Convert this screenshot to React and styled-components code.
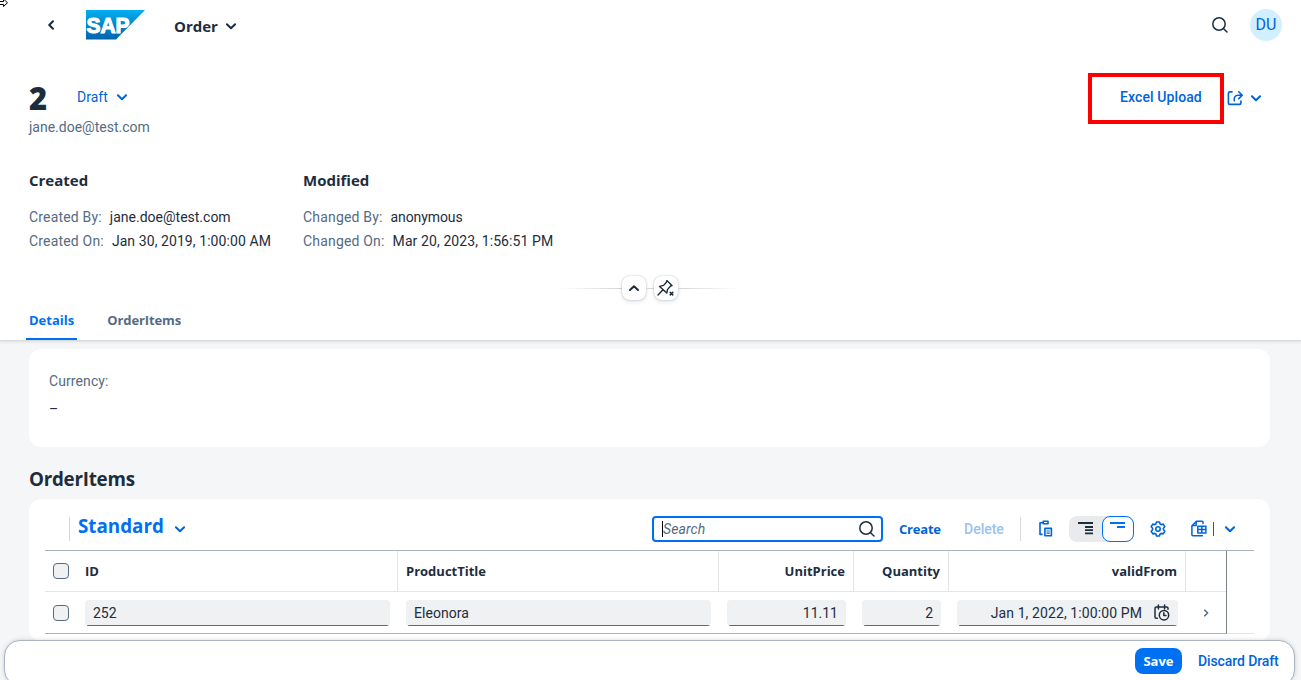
import React from "react";
import styled, { createGlobalStyle } from "styled-components";

const Global = createGlobalStyle`
  * { box-sizing: border-box; }
  html, body { margin: 0; padding: 0; }
  body { width: 1301px; height: 680px; overflow: hidden; background: #fff; }
`;
const Page = styled.div`
  position: relative; width: 1301px; height: 680px; overflow: hidden;
  display: flex; flex-direction: column; background: #f5f6f7;
  font-family: Roboto, "Noto Sans", sans-serif; font-size: 14px; line-height: 20px; color: #1d2d3e;
`;
const Text = styled.span`
  white-space: nowrap;
  font-size: ${(p) => p.$size || 14}px;
  font-weight: ${(p) => p.$weight || 400};
  color: ${(p) => p.$color || "#1d2d3e"};
  letter-spacing: ${(p) => p.$ls || 0}px;
  font-style: ${(p) => (p.$italic ? "italic" : "normal")};
`;
const Strong = styled(Text)`
  font-family: "Open Sans", sans-serif; font-weight: 700; font-size: ${(p) => p.$size || 13}px;
`;
const Svg = styled.svg`
  display: block; flex: none; fill: none; stroke: currentColor; stroke-linecap: round; stroke-linejoin: round;
  color: ${(p) => p.$color || "#1d2d3e"};
`;
const Cursor = styled(Svg)`position: absolute; left: 0; top: 0;`;

const Header = styled.header`
  flex: none; height: 341px; background: #fff; border-bottom: 1px solid #d9d9d9;
  box-shadow: 0 1px 3px rgba(34, 53, 72, 0.12); display: flex; flex-direction: column; position: relative;
`;
const ShellBar = styled.div`
  height: 51px; padding: 0 19px 1px 45px; display: flex; align-items: center;
`;
const Logo = styled.svg`display: block; margin: 0 29px 0 28px;`;
const ShellTitle = styled.div`display: flex; align-items: center; gap: 7px; padding-top: 1px;`;
const Spacer = styled.div`flex: 1;`;
const Avatar = styled.div`
  width: 32px; height: 32px; border-radius: 50%; background: #d1efff; margin-left: 22px;
  display: flex; align-items: center; justify-content: center;
`;
const TitleRow = styled.div`
  margin-top: 22px; height: 64px; padding: 0 39px 0 29px; display: flex; align-items: flex-start; justify-content: space-between;
`;
const TitleBlock = styled.div`display: flex; flex-direction: column;`;
const TitleLine = styled.div`height: 44px; padding-top: 4px; display: flex; align-items: center;`;
const ObjectTitle = styled.h1`
  margin: 0; width: 48px; padding-top: 1px; font: 900 31px/40px "Noto Sans", sans-serif; color: #1d2d3e;
`;
const Actions = styled.div`display: flex; align-items: center; height: 51px; padding-bottom: 2px;`;
const Highlight = styled.div`
  width: 136px; height: 51px; border: 4px solid #fe0000; padding: 0 0 3px 28px; margin: 2px 3px 0 0;
  display: flex; align-items: center;
`;
const Facets = styled.div`display: flex; margin-top: 33px; padding-left: 29px;`;
const Facet = styled.section`width: 274px; display: flex; flex-direction: column;`;
const FacetTitle = styled.div`height: 35px;`;
const Field = styled.div`height: 24px; line-height: 24px; display: flex; gap: 8px;`;
const EmptyValue = styled.div`padding-top: 8px; height: 28px;`;
const SnapBar = styled.div`
  margin-top: 23px; height: 24px; padding-left: 560px; display: flex; align-items: center;
`;
const Line = styled.div`
  height: 1px; width: ${(p) => p.$w}px;
  background: ${(p) => (p.$dir ? `linear-gradient(to ${p.$dir}, rgba(217,217,217,0), #d0d3d6)` : "#d9d9d9")};
`;
const SnapButton = styled.button`
  width: 24px; height: 24px; padding: 0; border: 0; border-radius: 8px; background: #fff;
  box-shadow: 0 0 2px rgba(34, 53, 72, 0.3), 0 2px 4px rgba(34, 53, 72, 0.12);
  display: flex; align-items: center; justify-content: center;
`;
const Tabs = styled.nav`height: 40px; padding-left: 26px; display: flex; gap: 27px;`;
const Tab = styled.div`
  height: 40px; padding: 10px 3px 0; line-height: 20px;
  border-bottom: 2px solid ${(p) => (p.$active ? "#0070f2" : "transparent")}; border-radius: 2px 2px 0 0;
`;

const Content = styled.main`flex: 1; padding: 8px 31px 0 29px; display: flex; flex-direction: column;`;
const Card = styled.section`
  flex: none; background: #fff; border-radius: 12px; height: ${(p) => p.$h}px; padding: ${(p) => p.$pad};
  display: flex; flex-direction: column;
`;
const SectionTitle = styled.h2`margin: 0; height: 52px; padding-top: 20px; line-height: 24px; font-size: 20px;`;
const Toolbar = styled.div`
  height: 52px; display: flex; align-items: center; padding: 8px 0 0; border-bottom: 1px solid #a8b2bd;
`;
const ToolItem = styled.div`height: 26px; display: flex; align-items: center; margin-left: ${(p) => p.$ml || 0}px; width: ${(p) => (p.$w ? p.$w + "px" : "auto")};`;
const VariantTitle = styled.div`height: 26px; width: 96px; margin-left: 8px; padding-bottom: 5px; display: flex; align-items: center;`;
const Divider = styled.div`width: 1px; height: ${(p) => p.$h || 24}px; background: ${(p) => p.$color || "#d9d9d9"}; margin-left: ${(p) => p.$ml || 0}px;`;
const SearchField = styled.div`
  width: 231px; height: 26px; border: 2px solid #0070f2; border-radius: 4px; background: #fff;
  display: flex; align-items: center; justify-content: space-between; padding: 0 6px 0 8px;
`;
const Caret = styled.div`width: 1px; height: 16px; background: #000;`;
const Inline = styled.div`display: flex; align-items: center;`;
const Segmented = styled.div`
  width: 65px; height: 26px; border-radius: 8px; background: #e8eaec; display: flex; margin-left: 16px;
`;
const Segment = styled.div`
  width: ${(p) => (p.$on ? 32 : 33)}px; height: 26px; border-radius: 8px; display: flex; align-items: center; justify-content: center; padding-bottom: 2px;
  border: 1px solid ${(p) => (p.$on ? "#0070f2" : "transparent")}; background: ${(p) => (p.$on ? "#fff" : "transparent")};
`;
const Table = styled.div`
  width: 1182px; border-right: 1px solid #7b8288; border-bottom: 1px solid #a8b2bd;
`;
const TableWrap = styled.div`display: flex; align-items: stretch; height: 83px;`;
const TableRest = styled.div`flex: 1; border-bottom: 1px solid #e5e5e5;`;
const Row = styled.div`
  display: grid; grid-template-columns: 32px 321px 321px 135px 95px 237px 40px; height: 41px;
  border-bottom: ${(p) => (p.$head ? "1px solid #e5e5e5" : "0")};
`;
const Cell = styled.div`
  display: flex; align-items: center; padding: 0 ${(p) => (p.$line ? 8 : 7)}px 0 8px;
  justify-content: ${(p) => (p.$end ? "flex-end" : "flex-start")};
  border-right: 1px solid ${(p) => (p.$line ? "#e5e5e5" : "transparent")};
`;
const NavCell = styled.div`display: flex; align-items: center; padding-left: 14px;`;
const Check = styled.div`width: 16px; height: 16px; flex: none; border: 1px solid #556b82; border-radius: 4px; background: #eff1f2;`;
const Input = styled.div`
  flex: 1; height: 26px; border-radius: 4px; background: linear-gradient(#556b82, #556b82) center bottom / calc(100% - 3px) 1px no-repeat #eff1f2;
  display: flex; align-items: center; padding: 0 8px; justify-content: ${(p) => (p.$end ? "flex-end" : "flex-start")}; gap: 12px;
`;
const Footer = styled.footer`
  position: absolute; left: 4px; top: 640px; width: 1291px; height: 46px; border: 1px solid #a8b4c0; border-radius: 16px;
  background: #fff; box-shadow: 0 0 4px rgba(34, 53, 72, 0.2); display: flex; justify-content: flex-end; padding: 7px 0 0 0;
`;
const SaveButton = styled.button`
  width: 47px; height: 26px; border: 0; border-radius: 8px; background: #0070f2; padding: 0; font-family: inherit;
  display: flex; align-items: center; justify-content: center;
`;

const BLUE = "#0064d9";
const GREY = "#556b82";

const Chevron = ({ dir = "down", color, size = 12, w = 2 }) => {
  const d = { down: "M1.9 4.2 L6 8.2 L10.1 4.2", up: "M2 8 L6 4.2 L10 8", left: "M8 2.2 L4.2 6 L8 9.8", right: "M4.8 3.2 L7.6 6 L4.8 8.8" }[dir];
  return <Svg width={size} height={size} viewBox="0 0 12 12" strokeWidth={w} $color={color}><path d={d} /></Svg>;
};
const SearchIcon = () => (
  <Svg width="16" height="16" viewBox="0 0 16 16" strokeWidth="1.5"><circle cx="7" cy="7" r="6.2" /><path d="M11.6 11.7 L15 15" /></Svg>
);
const ShareIcon = () => (
  <Svg width="16" height="16" viewBox="0 0 16 16" strokeWidth="1.6" $color={BLUE}>
    <path d="M5 1.9 H2.9 Q1.4 1.9 1.4 3.4 V12.9 Q1.4 14.4 2.9 14.4 H11.9 Q13.9 14.4 13.9 12.9 V11" />
    <path d="M7.3 10.8 Q6.7 5.2 11 5.2 H14.8 M11.8 1.8 L15.2 5.2 L11.8 8.6" />
  </Svg>
);
const PinIcon = () => (
  <Svg width="18" height="18" viewBox="0 0 18 18" strokeWidth="1.4">
    <path d="M9.8 1.6 L15 6.6 L13.6 7 L10.6 10.4 L9.8 14 L2.6 7.4 L6.6 6.4 L9.4 3.2 Z M6 10.8 L1 15.9" />
    <path d="M13.2 13.4 L15.8 15.8 M15.8 13.4 L13.2 15.8" strokeWidth="1.6" />
  </Svg>
);
const PasteIcon = () => (
  <Svg width="14" height="17" viewBox="0 0 14 17" strokeWidth="1.6" $color={BLUE}>
    <path d="M3.4 2.8 H1 V14.4 H3 M4.2 1.2 H9 V3.8 H4.2 Z" />
    <path d="M5.9 8.4 H12.4 V15.8 H5.9 Z" /><path d="M7.9 11 H10.4 M7.9 13.2 H10.4" strokeWidth="1.2" />
  </Svg>
);
const GearIcon = () => (
  <Svg width="16" height="16" viewBox="0 0 16 16" strokeWidth="1.6" $color={BLUE}>
    <path d="M6.5 1 H9.5 L10.1 3 L11.2 3.6 L13.2 3.1 L14.8 5.7 L13.4 7.3 V8.7 L14.8 10.3 L13.2 12.9 L11.2 12.4 L10.1 13 L9.5 15 H6.5 L5.9 13 L4.8 12.4 L2.8 12.9 L1.2 10.3 L2.6 8.7 V7.3 L1.2 5.7 L2.8 3.1 L4.8 3.6 L5.9 3 Z" />
    <circle cx="8" cy="8" r="2.2" />
  </Svg>
);
const ExcelIcon = () => (
  <Svg width="16" height="17" viewBox="0 0 16 17" strokeWidth="1.5" $color={BLUE}>
    <path d="M12 3.4 V2.2 Q12 1.2 11 1.2 H5.4 L.9 5.8 V14.8 Q.9 15.8 1.9 15.8 H11.4 M5.2 1.6 V5.6 H1.4" />
    <path d="M6.8 6.3 H14.9 V13 H6.8 Z M10.8 6.3 V13 M6.8 9.6 H14.9" />
  </Svg>
);
const CalendarIcon = () => (
  <Svg width="16" height="17" viewBox="0 0 16 17" strokeWidth="1.5">
    <path d="M3.3 14.3 H2.4 Q1 14.3 1 12.9 V4.3 Q1 2.9 2.4 2.9 H12.6 Q14 2.9 14 4.3 V5.2 M4.4 1 V5 M10.6 1 V5" />
    <circle cx="10" cy="11.2" r="4.7" /><path d="M9.8 8.8 V11.4 H12" />
  </Svg>
);

const FieldPair = ({ label, value, vls }) => (
  <Field><Text $color={GREY} $ls={0.18}>{label}</Text><Text $ls={vls}>{value}</Text></Field>
);

export default function App() {
  return (
    <Page>
      <Global />
      <Header>
        <ShellBar>
          <Chevron dir="left" />
          <Logo width="60" height="30" viewBox="0 0 60 30">
            <defs><linearGradient id="sap" x1="0" y1="0" x2="0" y2="1"><stop offset="0" stopColor="#00aeef" /><stop offset="1" stopColor="#0062ac" /></linearGradient></defs>
            <path d="M1 0 H60 L31 29.5 H1 Z" fill="url(#sap)" />
            <text x="1.5" y="22.8" textLength="43" lengthAdjust="spacingAndGlyphs" fontFamily="Liberation Sans, sans-serif" fontWeight="700" fontSize="22.5" fill="#fff" stroke="#fff" strokeWidth="1.2">SAP</text>
          </Logo>
          <ShellTitle><Strong $size={15}>Order</Strong><Chevron /></ShellTitle>
          <Spacer />
          <SearchIcon />
          <Avatar><Text $size={16} $color={BLUE}>DU</Text></Avatar>
        </ShellBar>
        <TitleRow>
          <TitleBlock>
            <TitleLine>
              <ObjectTitle>2</ObjectTitle>
              <Text $color={BLUE}>Draft</Text>
              <ToolItem $ml={8}><Chevron color={BLUE} /></ToolItem>
            </TitleLine>
            <Text $color={GREY}>jane.doe@test.com</Text>
          </TitleBlock>
          <Actions>
            <Highlight><Text $color={BLUE} $weight={500} $ls={0.1}>Excel Upload</Text></Highlight>
            <ShareIcon />
            <ToolItem $ml={7}><Chevron color={BLUE} /></ToolItem>
          </Actions>
        </TitleRow>
        <Facets>
          <Facet>
            <FacetTitle><Strong $size={15}>Created</Strong></FacetTitle>
            <FieldPair label="Created By:" value="jane.doe@test.com" />
            <FieldPair label="Created On:" value="Jan 30, 2019, 1:00:00 AM" vls={0.08} />
          </Facet>
          <Facet>
            <FacetTitle><Strong $size={15}>Modified</Strong></FacetTitle>
            <FieldPair label="Changed By:" value="anonymous" vls={-0.1} />
            <FieldPair label="Changed On:" value="Mar 20, 2023, 1:56:51 PM" vls={0.1} />
          </Facet>
        </Facets>
        <SnapBar>
          <Line $w={62} $dir="right" /><SnapButton><Chevron dir="up" /></SnapButton>
          <Line $w={8} /><SnapButton><PinIcon /></SnapButton><Line $w={60} $dir="left" />
        </SnapBar>
        <Tabs>
          <Tab $active><Strong $color="#0070f2">Details</Strong></Tab>
          <Tab><Strong $color={GREY} $ls={-0.1}>OrderItems</Strong></Tab>
        </Tabs>
      </Header>
      <Content>
        <Card $h={98} $pad="22px 20px 0">
          <Text $color={GREY} $ls={0.1}>Currency:</Text>
          <EmptyValue><Text>–</Text></EmptyValue>
        </Card>
        <SectionTitle><Strong $size={18.8} $ls={-0.25}>OrderItems</Strong></SectionTitle>
        <Card $h={142} $pad="0 16px">
          <Toolbar>
            <Divider $ml={24} />
            <VariantTitle><Strong $size={18.8} $color="#0070f2">Standard</Strong></VariantTitle>
            <Chevron color={BLUE} />
            <Spacer />
            <SearchField>
              <Inline><Caret /><Text $italic $color={GREY} $ls={0.1}>Search</Text></Inline>
              <SearchIcon />
            </SearchField>
            <ToolItem $ml={16} $w={65}><Strong $color={BLUE} $ls={-0.2}>Create</Strong></ToolItem>
            <ToolItem $w={56}><Text $weight={500} $color="#99c1f0">Delete</Text></ToolItem>
            <Divider />
            <ToolItem $ml={18}><PasteIcon /></ToolItem>
            <Segmented>
              <Segment>
                <Svg width="16" height="14" viewBox="0 0 16 14"><path d="M0 2 H15 M7 6 H15 M7 9.2 H15 M7 12.4 H15" strokeWidth="1.8" strokeLinecap="butt" /></Svg>
              </Segment>
              <Segment $on>
                <Svg width="16" height="14" viewBox="0 0 16 14" $color="#0070f2"><path d="M0 2 H15 M7 6 H15" strokeWidth="1.8" strokeLinecap="butt" /></Svg>
              </Segment>
            </Segmented>
            <ToolItem $ml={16}><GearIcon /></ToolItem>
            <ToolItem $ml={25}><ExcelIcon /></ToolItem>
            <Divider $h={14} $color={BLUE} $ml={6} />
            <ToolItem $ml={10} $w={30}><Chevron color={BLUE} /></ToolItem>
          </Toolbar>
          <TableWrap>
            <Table>
              <Row $head>
                <Cell><Check /></Cell>
                <Cell $line><Strong>ID</Strong></Cell>
                <Cell $line><Strong>ProductTitle</Strong></Cell>
                <Cell $line $end><Strong>UnitPrice</Strong></Cell>
                <Cell $line $end><Strong>Quantity</Strong></Cell>
                <Cell $line $end><Strong>validFrom</Strong></Cell>
                <NavCell />
              </Row>
              <Row>
                <Cell><Check /></Cell>
                <Cell><Input><Text>252</Text></Input></Cell>
                <Cell><Input><Text $ls={0.05}>Eleonora</Text></Input></Cell>
                <Cell><Input $end><Text>11.11</Text></Input></Cell>
                <Cell><Input $end><Text>2</Text></Input></Cell>
                <Cell><Input $end><Text $ls={0.1}>Jan 1, 2022, 1:00:00 PM</Text><CalendarIcon /></Input></Cell>
                <NavCell><Chevron dir="right" color={GREY} w={1.6} /></NavCell>
              </Row>
            </Table>
            <TableRest />
          </TableWrap>
        </Card>
      </Content>
      <Footer>
        <SaveButton><Strong $color="#fff">Save</Strong></SaveButton>
        <ToolItem $ml={16} $w={96}><Text $weight={500} $color={BLUE} $ls={-0.1}>Discard Draft</Text></ToolItem>
      </Footer>
      <Cursor width="9" height="8" viewBox="0 0 9 8" strokeWidth="1" $color="#000"><path d="M0 1.5 H3.5 V-1 L7.5 2.8 L3.5 6.5 V4.5 H0" fill="#fff" /></Cursor>
    </Page>
  );
}
